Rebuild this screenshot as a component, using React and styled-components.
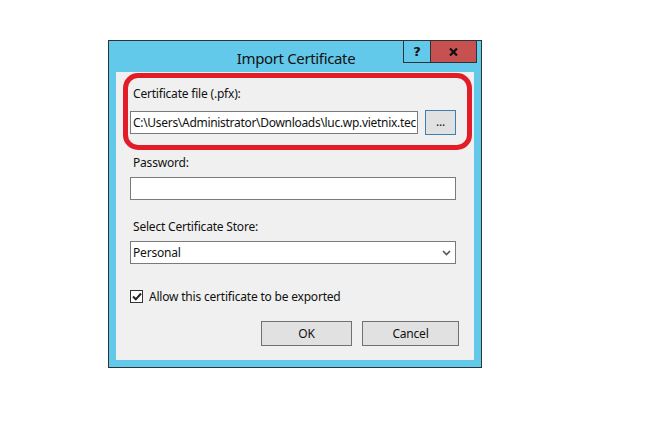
import React from "react";
import styled, { createGlobalStyle } from "styled-components";

const Global = createGlobalStyle`
  html, body { margin: 0; padding: 0; background: #ffffff; }
  body { font-family: "Noto Sans", "Open Sans", sans-serif; }
  * { box-sizing: border-box; }
`;

const Page = styled.div`
  width: 648px;
  height: 422px;
  padding: 40px 0 0 108px;
  background: #ffffff;
`;

const Dialog = styled.div`
  width: 374px;
  height: 328px;
  border: 1px solid #2e3436;
  background: #63c9ea;
  display: flex;
  flex-direction: column;
`;

const TitleBar = styled.div`
  height: 31px;
  display: grid;
  grid-template-areas: "stack";
`;

const Title = styled.div`
  grid-area: stack;
  justify-self: center;
  align-self: center;
  margin-top: 2px;
  margin-left: 2px;
  font-size: 15px;
  color: #111;
  letter-spacing: -0.35px;
`;

const FrameButtons = styled.div`
  grid-area: stack;
  justify-self: end;
  align-self: start;
  margin-right: 4px;
  display: flex;
  height: 22px;
  border-left: 1px solid #2e3436;
  border-bottom: 1px solid #2e3436;
`;

const FrameButton = styled.div`
  width: ${(p) => p.$w}px;
  height: 21px;
  background: ${(p) => p.$bg};
  border-right: 1px solid #2e3436;
  display: flex;
  align-items: center;
  justify-content: center;
  font-family: "DejaVu Sans", sans-serif;
  font-weight: bold;
  font-size: 13px;
  color: #111;
`;

const Client = styled.div`
  position: relative;
  flex: 1;
  margin: 0 7px 7px 7px;
  background: #f0f0f0;
  padding: 14px 18px 0 14px;
  display: flex;
  flex-direction: column;
  font-size: 12px;
  letter-spacing: -0.2px;
  color: #111;
`;

const Label = styled.div`
  height: 15px;
  line-height: 15px;
  padding-left: 3px;
  margin-bottom: ${(p) => p.$mb}px;
`;

const Row = styled.div`
  display: flex;
  align-items: flex-start;
  gap: 7px;
  margin-bottom: ${(p) => p.$mb}px;
`;

const Field = styled.div`
  width: ${(p) => p.$w}px;
  height: 23px;
  border: 1px solid #7a7a7a;
  background: #ffffff;
  padding: 0 2px;
  line-height: 21px;
  letter-spacing: ${(p) => (p.$tight ? "-0.3px" : "-0.2px")};
  white-space: nowrap;
  overflow: hidden;
  display: flex;
  align-items: center;
  justify-content: space-between;
`;

const BrowseButton = styled.div`
  width: 31px;
  height: 25px;
  margin-top: -1px;
  border: 1px solid #3c7fb1;
  background: #e1e1e1;
  display: flex;
  align-items: center;
  justify-content: center;
  padding-bottom: 2px;
`;

const CheckRow = styled.label`
  display: flex;
  align-items: center;
  gap: 6px;
  height: 14px;
  margin-bottom: 18px;
`;

const CheckBox = styled.span`
  width: 13px;
  height: 13px;
  border: 1px solid #333;
  background: #fff;
  display: flex;
  align-items: center;
  justify-content: center;
`;

const Buttons = styled.div`
  display: flex;
  justify-content: flex-end;
  gap: 10px;
  margin-right: -3px;
`;

const Button = styled.div`
  width: ${(p) => p.$w}px;
  height: 25px;
  border: 1px solid #707070;
  background: #e1e1e1;
  display: flex;
  align-items: center;
  justify-content: center;
`;

const Highlight = styled.div`
  position: absolute;
  left: 7px;
  top: 1px;
  width: 349px;
  height: 77px;
  border: 5px solid #e21d27;
  border-radius: 15px;
  pointer-events: none;
`;

export default function App() {
  return (
    <>
      <Global />
      <Page>
        <Dialog>
          <TitleBar>
            <Title>Import Certificate</Title>
            <FrameButtons>
              <FrameButton $w={27} $bg="#63c9ea">?</FrameButton>
              <FrameButton $w={46} $bg="#c75050">
                <svg width="9" height="8" viewBox="0 0 9 8">
                  <path d="M1 0.5 L8 7.5 M8 0.5 L1 7.5" stroke="#111" strokeWidth="2.2" />
                </svg>
              </FrameButton>
            </FrameButtons>
          </TitleBar>
          <Client>
            <Label $mb={10}>Certificate file (.pfx):</Label>
            <Row $mb={20}>
              <Field $w={289} $tight>C:\Users\Administrator\Downloads\luc.wp.vietnix.tec</Field>
              <BrowseButton>...</BrowseButton>
            </Row>
            <Label $mb={7}>Password:</Label>
            <Row $mb={19}>
              <Field $w={326} />
            </Row>
            <Label $mb={7}>Select Certificate Store:</Label>
            <Row $mb={25}>
              <Field $w={327}>
                <span>Personal</span>
                <svg width="9" height="6" viewBox="0 0 9 6" style={{ marginRight: 2 }}>
                  <path d="M1 1 L4.5 4.5 L8 1" fill="none" stroke="#555" strokeWidth="1.6" />
                </svg>
              </Field>
            </Row>
            <CheckRow>
              <CheckBox>
                <svg width="10" height="9" viewBox="0 0 10 9">
                  <path d="M1 4.5 L3.8 7.3 L9 1.5" fill="none" stroke="#222" strokeWidth="2" />
                </svg>
              </CheckBox>
              <span>Allow this certificate to be exported</span>
            </CheckRow>
            <Buttons>
              <Button $w={91}>OK</Button>
              <Button $w={97}>Cancel</Button>
            </Buttons>
            <Highlight />
          </Client>
        </Dialog>
      </Page>
    </>
  );
}
